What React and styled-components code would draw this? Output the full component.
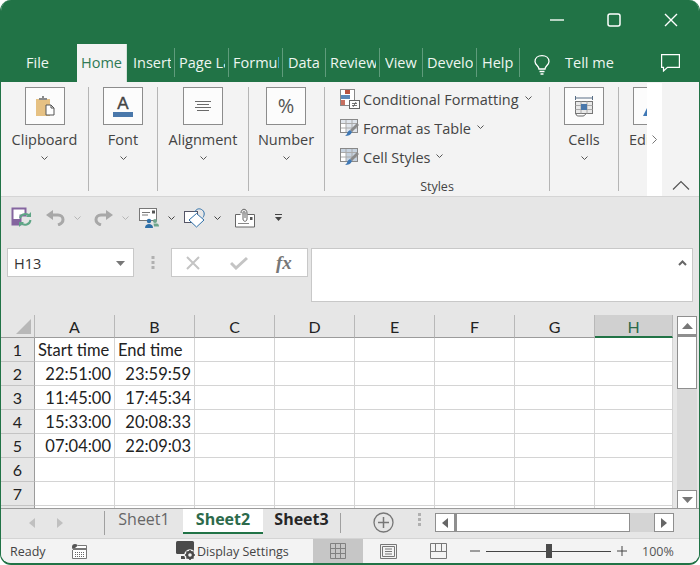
import React from "react";
import styled, { createGlobalStyle } from "styled-components";

const Global = createGlobalStyle`
  html, body { margin: 0; padding: 0; background: #fff; }
  body { font-family: "Open Sans", "Noto Sans", sans-serif; }
  * { box-sizing: border-box; }
`;

const Window = styled.div`
  width: 700px; height: 565px; background: #e6e6e6; overflow: hidden;
  display: flex; flex-direction: column;
  border-left: 1px solid #217346; border-right: 1px solid #217346; border-bottom: 2px solid #217346;
  border-radius: 11px;
`;
const TitleBar = styled.div`
  height: 44px; background: #217346; display: flex; flex: none; align-items: flex-start;
  justify-content: flex-end; color: #fff;
`;
const WinBtn = styled.div`
  width: 57px; height: 40px; display: flex; align-items: center; justify-content: center; padding-top: 0;
  svg { display: block; }
`;
const TabBar = styled.div`
  height: 38px; flex: none; background: #217346; display: flex; align-items: flex-end;
  color: #eef6f1; font-size: 14.5px;
`;
const Tab = styled.div`
  width: ${p => p.$w}px; height: 29px; margin-bottom: 5px; line-height: 29px; flex: none;
  padding-left: ${p => p.$pad}px; padding-right: 3px;
  border-right: ${p => p.$plain ? "0" : "1px solid #5f9c7c"};
`;
const TabText = styled.div`
  white-space: nowrap; overflow: hidden;
`;
const ActiveTab = styled.div`
  width: 50px; height: 38px; flex: none; background: #f3f3f3; color: #2f7a55; font-size: 14.5px;
  padding: 4px 0 0 4px; line-height: 29px; border-right: 1px solid #d4e2da;
`;
const Bulb = styled.div`
  margin: 0 15px 7px 14px; height: 20px; display: flex;
`;
const TellMe = styled.div`
  width: 96px; height: 29px; margin-bottom: 5px; line-height: 29px; flex: none;
`;
const Comment = styled.div`
  margin-bottom: 10px; height: 18px; display: flex;
`;

const Ribbon = styled.div`
  height: 115px; flex: none; background: #f3f3f3; display: flex; border-bottom: 1px solid #d5d5d5;
`;
const RibbonGroups = styled.div`
  width: 646px; flex: none; display: flex; overflow: hidden; padding-top: 5px; color: #444;
`;
const Group = styled.div`
  width: ${p => p.$w}px; height: 104px; flex: none; display: flex; flex-direction: column; align-items: center;
  padding-right: ${p => p.$pr || 0}px;
  border-right: ${p => p.$last ? "0" : "1px solid #b5b5b5"};
`;
const BigButton = styled.div`
  width: 40px; height: 38px; background: #fcfcfc; border: 1px solid #8c8c8c; flex: none;
  display: flex; flex-direction: column; align-items: center; justify-content: center;
`;
const EdgeButton = styled(BigButton)`
  align-self: flex-start; margin-left: 14px; align-items: flex-start; padding-left: 9px; padding-top: 8px;
`;
const GroupLabel = styled.div`
  margin-top: 5px; height: 20px; line-height: 20px; font-size: 14.5px; white-space: nowrap;
`;
const EdgeLabel = styled(GroupLabel)`
  align-self: flex-start; margin-left: 10px;
`;
const Caret = styled.div`
  margin-top: 6px; height: 4px; display: flex;
`;
const GlyphA = styled.div`
  font-family: "Liberation Sans", sans-serif; font-size: 17px; line-height: 14px; font-weight: 400; color: #444;
  -webkit-text-stroke: 0.4px #444; margin-top: 1px;
`;
const ABar = styled.div`
  width: 20px; height: 5px; background: #4a78ab; margin-top: 1px;
`;
const Percent = styled.div`
  font-size: 20px; color: #555; line-height: 22px;
`;
const StyleRows = styled.div`
  align-self: stretch; display: flex; flex-direction: column; gap: 5px; padding-left: 15px;
`;
const StyleRow = styled.div`
  height: 24px; display: flex; align-items: center; font-size: 14.5px; white-space: nowrap;
  svg:first-child { margin-right: 3px; }
`;
const RowCaret = styled.span`
  display: inline-flex; margin-left: 6px; margin-bottom: 2px;
`;
const StylesLabel = styled.div`
  margin-top: auto; margin-bottom: -1px; font-size: 12.5px; line-height: 10px; color: #444;
`;
const OverflowStrip = styled.div`
  width: 15px; flex: none; margin-top: 1px; background: #fff; display: flex; justify-content: center;
  padding-top: 52px;
`;
const CollapseArea = styled.div`
  flex: 1; display: flex; align-items: flex-end; justify-content: center; padding: 0 0 6px 0;
`;

const Qat = styled.div`
  height: 43px; flex: none; padding: 0 0 2px 10px; display: flex; align-items: center;
`;
const QatIcon = styled.div`
  display: flex; flex: none; margin-left: ${p => p.$ml || 0}px;
`;

const FormulaRow = styled.div`
  height: 54px; margin-top: 8px; flex: none; display: flex; padding-left: 6px;
`;
const NameBox = styled.div`
  width: 127px; height: 29px; background: #fff; border: 1px solid #c8c8c8; display: flex; align-items: center;
  justify-content: space-between; padding: 1px 8px 0 6px; font-size: 14.5px; color: #333;
`;
const Grip = styled.div`
  width: 37px; height: 29px; display: flex; align-items: center; justify-content: center;
`;
const FxBox = styled.div`
  width: 137px; height: 29px; background: #fff; border: 1px solid #c8c8c8; display: flex; align-items: center;
  padding-left: 14px; color: #8d8d8d;
`;
const FxText = styled.i`
  font-family: "Liberation Serif", serif; font-weight: 700; font-size: 19px; color: #777; margin-left: 28px;
`;
const FormulaInput = styled.div`
  width: 382px; height: 54px; margin-left: 3px; background: #fff; border: 1px solid #c8c8c8;
  display: flex; justify-content: flex-end; padding: 11px 5px 0 0;
`;

const GridArea = styled.div`
  height: 193px; margin-top: 13px; flex: none; display: flex;
`;
const Sheet = styled.div`
  width: 672px; height: 193px; overflow: hidden; background: #fff;
  display: grid; grid-template-columns: 34px repeat(7, 80px) 78px; grid-auto-rows: 24px;
  grid-template-rows: 23px;
  font-family: Lato, "Noto Sans", sans-serif; font-size: 16.5px; color: #222;
`;
const Corner = styled.div`
  background: #e6e6e6; border-bottom: 1px solid #9b9b9b; border-right: 1px solid #b8b8b8; display: flex;
  align-items: flex-end; justify-content: flex-end; padding: 0 3px 3px 0;
`;
const ColHead = styled.div`
  background: ${p => p.$on ? "#d0d0d0" : "#e6e6e6"};
  color: ${p => p.$on ? "#2c6a4b" : "#222"};
  border-bottom: ${p => p.$on ? "2px solid #217346" : "1px solid #9b9b9b"};
  border-right: 1px solid #b8b8b8;
  text-align: center; line-height: 23px; font-size: 16px;
`;
const RowHead = styled.div`
  background: #e6e6e6; border-bottom: 1px solid #c4c4c4; border-right: 1px solid #9b9b9b;
  text-align: center; line-height: 24px; font-size: 16px;
`;
const Cell = styled.div`
  border-bottom: 1px solid #d4d4d4; border-right: 1px solid #d4d4d4; line-height: 24px;
  padding: 0 3px; white-space: nowrap; overflow: hidden;
  text-align: ${p => p.$right ? "right" : "left"};
`;
const VScroll = styled.div`
  width: 20px; height: 193px; margin: 1px 0 0 4px; flex: none; background: #dadada; display: flex; flex-direction: column;
`;
const ScrollBtn = styled.div`
  width: 20px; height: 19px; background: #fff; border: 1px solid #8f8f8f; display: flex; align-items: center;
  justify-content: center; flex: none;
`;
const VThumb = styled.div`
  width: 20px; height: 54px; background: #fff; border: 1px solid #8f8f8f; border-top-width: 2px; flex: none;
`;
const VSpacer = styled.div` flex: 1; `;

const SheetTabs = styled.div`
  height: 30px; flex: none; border-top: 1px solid #9b9b9b; display: flex; align-items: flex-start; background: #e6e6e6;
`;
const TabNav = styled.div`
  width: 104px; height: 24px; margin-top: 2px; flex: none; display: flex; align-items: center; gap: 22px; padding-left: 28px;
  border-right: 1px solid #a0a0a0;
`;
const SheetTab = styled.div`
  width: ${p => p.$w}px; height: ${p => p.$active ? 25 : 24}px; flex: none; text-align: center;
  line-height: 20px; font-size: 16px; white-space: nowrap;
  font-weight: ${p => p.$bold || p.$active ? 700 : 400};
  color: ${p => p.$active ? "#2c6a4b" : p.$bold ? "#262626" : "#666"};
  background: ${p => p.$active ? "#fff" : "transparent"};
  border-bottom: ${p => p.$active ? "2px solid #217346" : "0"};
`;
const TabSep = styled.div`
  width: 1px; height: 20px; margin-top: 4px; background: #a0a0a0; flex: none;
`;
const AddSheet = styled.div`
  margin: 3px 0 0 32px; width: 21px; height: 21px; flex: none; display: flex;
`;
const HGrip = styled.div`
  margin: 4px 0 0 24px; width: 17px; height: 20px; flex: none; display: flex;
`;
const HScroll = styled.div`
  width: 239px; height: 19px; margin-top: 4px; flex: none; background: #d4d4d4; display: flex;
`;
const HThumb = styled.div`
  width: 175px; height: 19px; background: #fff; border: 1px solid #8f8f8f; border-left-width: 2px; flex: none;
`;

const StatusBar = styled.div`
  height: 25px; flex: none; background: #f3f3f3; border-top: 1px solid #d4d4d4; display: flex; align-items: center;
  font-size: 12.5px; color: #444;
`;
const Ready = styled.div` width: 71px; padding-left: 9px; flex: none; `;
const StatusIcon = styled.div`
  display: flex; flex: none; width: ${p => p.$w}px; margin-left: ${p => p.$ml || 0}px;
`;
const DisplayText = styled.div` width: 116px; flex: none; white-space: nowrap; `;
const ViewBtn = styled.div`
  width: 50px; height: 24px; flex: none; display: flex; align-items: center; justify-content: center;
  background: ${p => p.$on ? "#c6c6c6" : "transparent"};
`;
const Zoom = styled.div`
  width: 125px; height: 13px; position: relative; flex: none;
  display: flex; align-items: center;
`;
const ZoomTrack = styled.div` width: 125px; height: 1px; background: #444; `;
const ZoomThumb = styled.div`
  position: absolute; left: 60px; top: -1px; width: 6px; height: 14px; background: #4a4a4a;
`;
const ZoomText = styled.div` margin-left: 15px; white-space: nowrap; color: #555; `;

const Chev = ({ c = "#555" }) => (
  <svg width="7" height="4" viewBox="0 0 7 4"><path d="M.5.5l3 3 3-3" fill="none" stroke={c} strokeWidth="1" /></svg>
);

const ClipboardIcon = () => (
  <svg width="22" height="22" viewBox="0 0 22 22">
    <rect x="2" y="4" width="14" height="17" fill="#e6c183" />
    <path d="M5 5V3h3V1h2v2h3v2z" fill="#8a8a8a" />
    <path d="M12 10h5l3 3v7h-8z" fill="#fff" stroke="#555" />
    <path d="M17 10v3h3" fill="none" stroke="#555" />
  </svg>
);
const AlignIcon = () => (
  <svg width="16" height="10" viewBox="0 0 16 10" stroke="#6a6a6a" fill="none">
    <path d="M0 .5h16M2 3.500h12M0 6.500h16M2 9.500h12" />
  </svg>
);
const CellsIcon = () => (
  <svg width="20" height="22" viewBox="0 0 20 22" fill="none">
    <path d="M1.500 1v4M18.500 1v4M1.500 3h17" stroke="#5a6f86" />
    <rect x="1.500" y="6.500" width="17" height="12" fill="#e9e9e9" stroke="#777" />
    <path d="M7 6.500v12M13 6.500v12M1.500 10.500h17M1.500 14.500h17" stroke="#aaa" />
    <rect x="7" y="9" width="6" height="6" fill="#4a78ab" />
    <path d="M2 19c0 2 2 2 3 2h4c2 0 2-2 3-2" stroke="#666" />
  </svg>
);
const CondIcon = () => (
  <svg width="20" height="20" viewBox="0 0 20 20">
    <rect x=".5" y=".5" width="14" height="16" fill="#fff" stroke="#888" />
    <rect x="5" y="1" width="5" height="4" fill="#b8523f" />
    <rect x="1" y="6" width="9" height="4" fill="#5a87b8" />
    <rect x="1" y="11" width="4" height="5" fill="#c76f5f" />
    <rect x="9.500" y="11.500" width="10" height="8" fill="#fff" stroke="#666" />
    <path d="M12 14.500h5M12 16.500h5M13 18l3-5" stroke="#555" strokeWidth=".8" />
  </svg>
);
const TableBrush = ({ fill = "#dfe5ec" }) => (
  <svg width="20" height="20" viewBox="0 0 20 20">
    <rect x=".5" y="1.500" width="17" height="13" fill="#fff" stroke="#888" />
    <rect x="1" y="2" width="16" height="3.500" fill={fill} />
    <rect x="6" y="5" width="11" height="9" fill={fill} />
    <path d="M1 5.500h16M1 10h16M6 2v12M12 2v12" stroke="#aaa" fill="none" />
    <path d="M17 5l2 2-7 7-2-2z" fill="#8a8a8a" />
    <path d="M10 12l2 2c-1 3-4 4-7 4 2-1 2-3 3-4.500z" fill="#3f78b5" />
  </svg>
);
const SyncSaveIcon = () => (
  <svg width="21" height="22" viewBox="0 0 21 22" fill="none">
    <path d="M1.500 1.500h13v7h-5v9h-8z" fill="#fff" stroke="#84659f" strokeWidth="2" />
    <rect x="1" y="12" width="8" height="6" fill="#84659f" />
    <path d="M9 11a5.500 5.500 0 0 1 9.500-2" stroke="#5fa586" strokeWidth="2" />
    <path d="M19.500 13a5.500 5.500 0 0 1-9.500 3" stroke="#5fa586" strokeWidth="2" />
    <path d="M20 5v5h-5zM8 20v-5h5z" fill="#5fa586" />
  </svg>
);
const UndoIcon = ({ flip }) => (
  <svg width="19" height="16" viewBox="0 0 19 16" style={flip ? { transform: "scaleX(-1)" } : undefined}>
    <path d="M5 5h7c3 0 5 2 5 4.500S15 14 12 15" fill="none" stroke="#a8a8a8" strokeWidth="3" />
    <path d="M7 0v10L0 5z" fill="#a8a8a8" />
  </svg>
);
const MailPeopleIcon = () => (
  <svg width="20" height="20" viewBox="0 0 20 20">
    <rect x=".5" y=".5" width="17" height="12" fill="#fff" stroke="#777" />
    <path d="M3 4.500h8M3 7h6" stroke="#777" />
    <rect x="13" y="2.500" width="3" height="3" fill="#555" />
    <circle cx="10" cy="13" r="2.200" fill="#2e6fa8" />
    <path d="M6 20c0-3 2-4 4-4s4 1 4 4z" fill="#2e6fa8" />
    <circle cx="16" cy="13" r="2" fill="#6fa58c" />
    <path d="M14.500 15.500h3.500c1 0 2 1 2 3h-5z" fill="#6fa58c" />
  </svg>
);
const ShapesIcon = () => (
  <svg width="22" height="20" viewBox="0 0 22 20" fill="none">
    <rect x=".5" y="3.500" width="13" height="11" fill="#fff" stroke="#556" />
    <path d="M11 4c1-3 4-4 6.500-2.500 3 1.500 3.500 5 1.500 8" stroke="#2e6fa8" />
    <path d="M5 12l7.500-6.500 7.500 6.500-7.500 7z" fill="#fff" stroke="#2e6fa8" />
  </svg>
);
const AttachIcon = () => (
  <svg width="20" height="20" viewBox="0 0 20 20" fill="none">
    <path d="M.5 6.500h5M12.500 6.500h7v12.500H.5V6.500" fill="#fff" stroke="#666" />
    <path d="M3 15.500h11" stroke="#888" />
    <rect x="15" y="9" width="2.500" height="3" fill="#555" />
    <path d="M6 5c0-5 6-5 6 0v6c0 3-4 3-4 0V5c0-2 2-2 2 0v5" stroke="#666" />
  </svg>
);
const MacroIcon = () => (
  <svg width="15" height="15" viewBox="0 0 15 15">
    <circle cx="3" cy="3" r="3" fill="#555" />
    <path d="M6 1.500h8.500V14.500H.5V6" fill="#fff" stroke="#777" />
    <rect x="1" y="4" width="14" height="2" fill="#777" />
    <path d="M3 8.500h9M3 10.500h9M3 12.500h9" stroke="#666" strokeDasharray="1 1" />
  </svg>
);
const DisplayIcon = () => (
  <svg width="20" height="20" viewBox="0 0 20 20">
    <rect x="0" y="0" width="18" height="13" rx="1.500" fill="#4a4a4a" />
    <rect x="5" y="15" width="4" height="3" fill="#4a4a4a" />
    <circle cx="14" cy="14" r="5.800" fill="#f3f3f3" />
    <circle cx="14" cy="14" r="3" fill="none" stroke="#4a4a4a" strokeWidth="2.400" />
    <path d="M14 9v2M14 17v2M9 14h2M17 14h2M10.500 10.500l1.400 1.400M16.100 16.100l1.400 1.400M10.500 17.500l1.400-1.400M16.100 11.900l1.400-1.400" stroke="#4a4a4a" strokeWidth="1.600" />
  </svg>
);

const rows = [
  ["Start time", "End time"],
  ["22:51:00", "23:59:59"],
  ["11:45:00", "17:45:34"],
  ["15:33:00", "20:08:33"],
  ["07:04:00", "22:09:03"],
  ["", ""],
  ["", ""],
  ["", ""],
];
const cols = ["A", "B", "C", "D", "E", "F", "G", "H"];
const tabs = [
  ["Insert", 48, 6], ["Page Layout", 54, 4], ["Formulas", 54, 4], ["Data", 43, 5],
  ["Review", 54, 4], ["View", 43, 5], ["Developer", 54, 4], ["Help", 43, 5],
];

export default function App() {
  return (
    <>
      <Global />
      <Window>
        <TitleBar>
          <WinBtn>
            <svg width="14" height="2" viewBox="0 0 14 2"><path d="M0 1h14" stroke="#e8f3ec" strokeWidth="1.500" /></svg>
          </WinBtn>
          <WinBtn>
            <svg width="14" height="14" viewBox="0 0 14 14"><rect x="1" y="1" width="12" height="12" rx="2" fill="none" stroke="#fff" strokeWidth="1.500" /></svg>
          </WinBtn>
          <WinBtn>
            <svg width="14" height="14" viewBox="0 0 14 14"><path d="M1 1l12 12M13 1L1 13" stroke="#fff" strokeWidth="1.400" /></svg>
          </WinBtn>
        </TitleBar>
        <TabBar>
          <Tab $w={76} $pad={25} $plain><TabText>File</TabText></Tab>
          <ActiveTab>Home</ActiveTab>
          {tabs.map(([t, w, pad]) => (
            <Tab key={t} $w={w} $pad={pad}><TabText>{t}</TabText></Tab>
          ))}
          <Bulb>
            <svg width="16" height="20" viewBox="0 0 16 20" fill="none" stroke="#fff" strokeWidth="1.300">
              <path d="M5 14c0-3-4-4-4-7.500C1 3 4 .7 8 .7s7 2.300 7 5.800C15 10 11 11 11 14z" />
              <path d="M5.500 16.500h5M6.500 19h3" />
            </svg>
          </Bulb>
          <TellMe>Tell me</TellMe>
          <Comment>
            <svg width="19" height="18" viewBox="0 0 19 18" fill="none" stroke="#fff" strokeWidth="1.200">
              <path d="M.6.6h17.800v12.800H6.500L2.500 17v-3.600H.6z" />
            </svg>
          </Comment>
        </TabBar>
        <Ribbon>
          <RibbonGroups>
            <Group $w={88}>
              <BigButton><ClipboardIcon /></BigButton>
              <GroupLabel>Clipboard</GroupLabel>
              <Caret><Chev /></Caret>
            </Group>
            <Group $w={69}>
              <BigButton><GlyphA>A</GlyphA><ABar /></BigButton>
              <GroupLabel>Font</GroupLabel>
              <Caret><Chev /></Caret>
            </Group>
            <Group $w={91}>
              <BigButton><AlignIcon /></BigButton>
              <GroupLabel>Alignment</GroupLabel>
              <Caret><Chev /></Caret>
            </Group>
            <Group $w={76} $pr={1}>
              <BigButton><Percent>%</Percent></BigButton>
              <GroupLabel>Number</GroupLabel>
              <Caret><Chev /></Caret>
            </Group>
            <Group $w={225}>
              <StyleRows>
                <StyleRow><CondIcon />Conditional Formatting<RowCaret><Chev /></RowCaret></StyleRow>
                <StyleRow><TableBrush />Format as Table<RowCaret><Chev /></RowCaret></StyleRow>
                <StyleRow><TableBrush fill="#c6d2df" />Cell Styles<RowCaret><Chev /></RowCaret></StyleRow>
              </StyleRows>
              <StylesLabel>Styles</StylesLabel>
            </Group>
            <Group $w={69}>
              <BigButton><CellsIcon /></BigButton>
              <GroupLabel>Cells</GroupLabel>
              <Caret><Chev /></Caret>
            </Group>
            <Group $w={28} $last>
              <EdgeButton>
                <svg width="8" height="12" viewBox="0 0 8 12"><path d="M0 12l4-8 2 1-2 7z" fill="#3f78b5" /></svg>
              </EdgeButton>
              <EdgeLabel>Editing</EdgeLabel>
            </Group>
          </RibbonGroups>
          <OverflowStrip>
            <svg width="5" height="9" viewBox="0 0 5 9"><path d="M.5.5l4 4-4 4" fill="none" stroke="#777" /></svg>
          </OverflowStrip>
          <CollapseArea>
            <svg width="18" height="10" viewBox="0 0 18 10"><path d="M1 9.500l8-8 8 8" fill="none" stroke="#555" strokeWidth="1.200" /></svg>
          </CollapseArea>
        </Ribbon>
        <Qat>
          <QatIcon><SyncSaveIcon /></QatIcon>
          <QatIcon $ml={14}><UndoIcon /></QatIcon>
          <QatIcon $ml={9}><Chev c="#b5b5b5" /></QatIcon>
          <QatIcon $ml={13}><UndoIcon flip /></QatIcon>
          <QatIcon $ml={9}><Chev c="#b5b5b5" /></QatIcon>
          <QatIcon $ml={10}><MailPeopleIcon /></QatIcon>
          <QatIcon $ml={9}><Chev c="#444" /></QatIcon>
          <QatIcon $ml={9}><ShapesIcon /></QatIcon>
          <QatIcon $ml={8}><Chev c="#444" /></QatIcon>
          <QatIcon $ml={14}><AttachIcon /></QatIcon>
          <QatIcon $ml={20}>
            <svg width="7" height="7" viewBox="0 0 7 7"><path d="M0 .5h7" stroke="#444" /><path d="M0 3h7L3.500 7z" fill="#444" /></svg>
          </QatIcon>
        </Qat>
        <FormulaRow>
          <NameBox>
            H13
            <svg width="9" height="5" viewBox="0 0 9 5"><path d="M0 0h9L4.500 5z" fill="#777" /></svg>
          </NameBox>
          <Grip>
            <svg width="4" height="14" viewBox="0 0 4 14" fill="#b0b0b0"><rect width="3" height="3" x=".5" /><rect width="3" height="3" x=".5" y="5" /><rect width="3" height="3" x=".5" y="10" /></svg>
          </Grip>
          <FxBox>
            <svg width="14" height="14" viewBox="0 0 14 14"><path d="M1 1l12 12M13 1L1 13" stroke="#c4c4c4" strokeWidth="2" /></svg>
            <svg width="18" height="14" viewBox="0 0 18 14" style={{ marginLeft: 30 }}><path d="M1 7l5 5L17 2" fill="none" stroke="#c4c4c4" strokeWidth="3" /></svg>
            <FxText>fx</FxText>
          </FxBox>
          <FormulaInput>
            <svg width="9" height="6" viewBox="0 0 9 6"><path d="M1 5l3.500-3.500L8 5" fill="none" stroke="#666" strokeWidth="2" /></svg>
          </FormulaInput>
        </FormulaRow>
        <GridArea>
          <Sheet>
            <Corner>
              <svg width="15" height="15" viewBox="0 0 15 15"><path d="M15 0v15H0z" fill="#b8b8b8" /></svg>
            </Corner>
            {cols.map(c => <ColHead key={c} $on={c === "H"}>{c}</ColHead>)}
            {rows.map((r, i) => (
              <React.Fragment key={i}>
                <RowHead>{i + 1}</RowHead>
                {cols.map((c, j) => (
                  <Cell key={c} $right={i > 0}>{r[j] || ""}</Cell>
                ))}
              </React.Fragment>
            ))}
          </Sheet>
          <VScroll>
            <ScrollBtn><svg width="11" height="6" viewBox="0 0 11 6"><path d="M5.500 0L11 6H0z" fill="#777" /></svg></ScrollBtn>
            <VThumb />
            <VSpacer />
            <ScrollBtn><svg width="11" height="6" viewBox="0 0 11 6"><path d="M0 0h11L5.500 6z" fill="#777" /></svg></ScrollBtn>
          </VScroll>
        </GridArea>
        <SheetTabs>
          <TabNav>
            <svg width="6" height="10" viewBox="0 0 6 10"><path d="M6 0v10L0 5z" fill="#c0c0c0" /></svg>
            <svg width="6" height="10" viewBox="0 0 6 10"><path d="M0 0v10l6-5z" fill="#c0c0c0" /></svg>
          </TabNav>
          <SheetTab $w={78}>Sheet1</SheetTab>
          <SheetTab $w={80} $active>Sheet2</SheetTab>
          <SheetTab $w={77} $bold>Sheet3</SheetTab>
          <TabSep />
          <AddSheet>
            <svg width="21" height="21" viewBox="0 0 21 21" fill="none" stroke="#777" strokeWidth="1.300"><circle cx="10.500" cy="10.500" r="9.500" /><path d="M10.500 5v11M5 10.500h11" strokeWidth="1.500" /></svg>
          </AddSheet>
          <HGrip>
            <svg width="4" height="14" viewBox="0 0 4 14" fill="#b0b0b0"><rect width="3" height="3" y="0" /><rect width="3" height="3" y="5" /><rect width="3" height="3" y="10" /></svg>
          </HGrip>
          <HScroll>
            <ScrollBtn><svg width="6" height="10" viewBox="0 0 6 10"><path d="M6 0v10L0 5z" fill="#666" /></svg></ScrollBtn>
            <HThumb />
            <VSpacer />
            <ScrollBtn><svg width="6" height="10" viewBox="0 0 6 10"><path d="M0 0v10l6-5z" fill="#666" /></svg></ScrollBtn>
          </HScroll>
        </SheetTabs>
        <StatusBar>
          <Ready>Ready</Ready>
          <StatusIcon $w={104}><MacroIcon /></StatusIcon>
          <StatusIcon $w={21}><DisplayIcon /></StatusIcon>
          <DisplayText>Display Settings</DisplayText>
          <ViewBtn $on>
            <svg width="16" height="16" viewBox="0 0 16 16" fill="none" stroke="#808080"><path d="M.5.5h15v15H.5zM.5 5.500h15M.5 10.500h15M5.500.5v15M10.500.5v15" /></svg>
          </ViewBtn>
          <ViewBtn>
            <svg width="17" height="15" viewBox="0 0 17 15" fill="none" stroke="#777"><path d="M.5.5h16v14H.5zM2.500 2.500h12v10h-12zM5 5h7M5 7.500h7M5 10h7" /></svg>
          </ViewBtn>
          <ViewBtn>
            <svg width="17" height="16" viewBox="0 0 17 16" fill="none" stroke="#777"><path d="M.5.500h16v15H.5zM.5 8.500h16M5.500.500v8M11.500.500v8" /></svg>
          </ViewBtn>
          <StatusIcon $w={16} $ml={7}>
            <svg width="10" height="2" viewBox="0 0 10 2"><path d="M0 1h10" stroke="#444" /></svg>
          </StatusIcon>
          <Zoom>
            <ZoomTrack />
            <ZoomThumb />
          </Zoom>
          <StatusIcon $w={10} $ml={6}>
            <svg width="10" height="10" viewBox="0 0 10 10"><path d="M0 5h10M5 0v10" stroke="#444" /></svg>
          </StatusIcon>
          <ZoomText>100%</ZoomText>
        </StatusBar>
      </Window>
    </>
  );
}
